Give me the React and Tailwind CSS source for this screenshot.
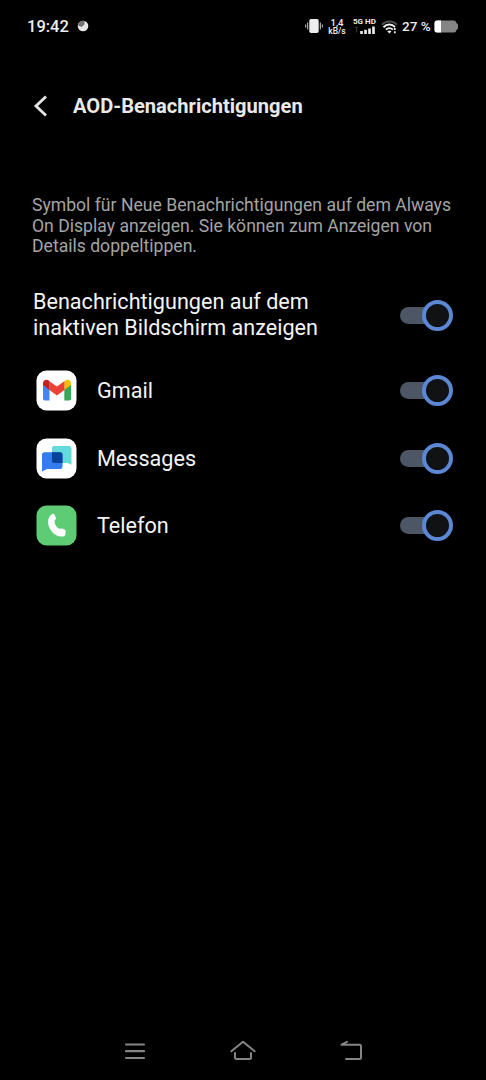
import React from 'react';

function Toggle() {
  return (
    <button role="switch" aria-checked="true" className="flex h-[31px] w-[53px] shrink-0 items-center">
      <span className="h-[17px] w-[31px] shrink-0 rounded-l-full bg-[#4d5664]" />
      <span className="-ml-[9px] h-[31px] w-[31px] shrink-0 rounded-full border-4 border-[#5b87d5] bg-[#111214]" />
    </button>
  );
}

function GmailIcon() {
  return (
    <svg width="41" height="41" viewBox="0 0 41 41">
      <rect x=".5" y=".5" width="40" height="40" rx="10" fill="#fff" />
      <path d="M7 14v14.500q0 2 2 2h4.500V18z" fill="#4285f4" />
      <path d="M28.300 18v12.500h4.700q2 0 2-2V14z" fill="#34a853" />
      <path d="M28.300 11.200v8.800l6.700-5v-1.500c0-3.500-3.300-4.600-5.800-2.900z" fill="#fbbc04" />
      <path d="M13.400 20v-8.800l7.500 5.400 7.500-5.400V20L20.900 25.500z" fill="#ea4335" />
      <path d="M7 13.500V15l6.500 5v-8.800l-.7-.6C10.200 8.900 7 10.300 7 13.500z" fill="#c5221f" />
    </svg>
  );
}

function MessagesIcon() {
  return (
    <svg width="41" height="41" viewBox="0 0 41 41">
      <rect x=".5" y=".5" width="40" height="40" rx="10" fill="#fff" />
      <path d="M18 8h15q2.500 0 2.500 2.500v16.300L31.500 25H16V10q0-2 2-2z" fill="#63dbda" />
      <path d="M8.500 14.300H24q2.500 0 2.500 2.500v11.700q0 2.500-2.500 2.500H11l-5 2.500V16.800q0-2.500 2.500-2.500z" fill="#327ced" />
      <path d="M16 14.300h8q2.500 0 2.500 2.500V25H18q-2 0-2-2z" fill="#07439b" />
    </svg>
  );
}

function PhoneIcon() {
  return (
    <svg width="41" height="41" viewBox="0 0 41 41">
      <rect x=".5" y=".5" width="40" height="40" rx="10" fill="#5dcc75" />
      <path d="M16.500 8.900c.9-.5 1.600-.2 1.900.6l1.500 3.300c.3.700.1 1.300-.4 1.700l-.8.800c-.6 3.300 1.700 7.300 4.900 8.500l1-.3c.6-.2 1.100-.1 1.700.1l2.500 1.200c.8.400 1 .9.900 1.700l-.4 3.100c-.1.900-.5 1.400-1.400 1.600-4.300 1-8.800-.6-12-4.500-3.300-3.800-4.600-8.700-3.500-12.600.7-2.400 2-4.200 4.100-5.200z" fill="#fff" />
    </svg>
  );
}

function StatusBar() {
  return (
    <div className="flex h-[53px] items-center pl-[27px] pr-[27px] text-[#eeeeee]">
      <span className="w-[43px] whitespace-nowrap pt-[1px] text-[16.500px] font-medium">19:42</span>
      <svg className="-mt-[1px] ml-[7px]" width="12" height="12" viewBox="0 0 12 12">
        <circle cx="6" cy="6" r="5.300" fill="#e8e8e8" />
        <path d="M1 5.500A5 5 0 0 1 6 .8l1.500.2v3.500L4.500 7z" fill="#737373" />
      </svg>
      <svg className="-mt-[1px] ml-auto" width="18" height="16" viewBox="0 0 18 16">
        <rect x="4.300" y="1" width="9.400" height="14" rx="1.800" fill="#eee" />
        <path d="M2.700 4.500v7M.7 6.500v3M15.300 4.500v7M17.300 6.500v3" stroke="#ccc" strokeWidth="1" />
      </svg>
      <div className="ml-[5px] w-[20px] whitespace-nowrap text-center font-medium">
        <div className="-ml-[2px] text-[9.500px] leading-[9px]">1,4</div>
        <div className="-ml-[2px] text-[8.500px] leading-[9px]">kB/s</div>
      </div>
      <div className="-mt-[1px] ml-[5px] w-[24px] whitespace-nowrap text-[8px] font-bold leading-[8px]">
        <div>5G HD</div>
        <svg className="ml-[1px]" width="22" height="8" viewBox="0 0 22 8">
          <path d="M1 1.500h3M2.500 1.500v5" stroke="#333" />
          <path d="M7.500 8V5M11.500 8V3.800M15.500 8V2.400M19.500 8V.5" stroke="#eee" strokeWidth="2.600" />
        </svg>
      </div>
      <svg className="ml-[4px]" width="17" height="14" viewBox="0 0 17 14" fill="none">
        <path d="M1 4.700C5 .3 12 .3 16 4.700" stroke="#515151" strokeWidth="1.800" />
        <path d="M2.500 7.200C6 3.700 10.700 3.700 14 7" stroke="#eee" strokeWidth="2" />
        <path d="M4.900 9.700c2-2 5-2 7 0" stroke="#eee" strokeWidth="1.800" />
        <path d="M6.300 11.200q2.200-1.600 4.200 0l-2.100 2.300z" fill="#eee" />
        <path d="M13.800 8v2M13.800 11.200v2" stroke="#eee" strokeWidth="1.700" />
      </svg>
      <span className="ml-[4px] w-[29px] whitespace-nowrap text-[13.500px] font-medium">27 %</span>
      <svg className="ml-[3px]" width="25" height="13" viewBox="0 0 25 13">
        <path d="M3 .5h17q2 0 2.500 2.500l1.500 1.500v4L22.500 10q-.5 2.500-2.500 2.500H3q-2.500 0-2.500-2.500V3Q.5.500 3 .5z" fill="#858585" />
        <path d="M3 .5h4v12H3Q.5 12.500.5 10V3Q.5.500 3 .5z" fill="#fff" />
      </svg>
    </div>
  );
}

function AppRow({ icon, name }) {
  return (
    <div className="flex h-[67.500px] items-center pl-[4px]">
      {icon}
      <span className="ml-[20px] flex-1 pt-[1px] text-[21.600px] leading-[26px] text-[#f4f4f4]">{name}</span>
      <Toggle />
    </div>
  );
}

export default function App() {
  return (
    <div className="flex h-[1080px] w-[486px] flex-col overflow-hidden bg-black font-['Roboto',sans-serif]">
      <StatusBar />
      <header className="mt-[26px] flex h-[53px] items-center pl-[33px]">
        <svg width="16" height="22" viewBox="0 0 16 22" fill="none">
          <path d="M13 1.500 3 11l10 9.500" stroke="#e4e4e4" strokeWidth="2.900" />
        </svg>
        <h1 className="ml-[24px] whitespace-nowrap pt-[2px] text-[20.100px] font-bold text-[#e9e9e9]">AOD-Benachrichtigungen</h1>
      </header>
      <main className="flex-1 pl-[32px] pr-[33px] pt-[63px]">
        <p className="whitespace-nowrap text-[17.600px] leading-[20.700px] text-[#a4a4a4]">
          Symbol für Neue Benachrichtigungen auf dem Always<br />
          On Display anzeigen. Sie können zum Anzeigen von<br />
          Details doppeltippen.
        </p>
        <div className="mt-[32px] flex h-[52px] items-center justify-between">
          <p className="whitespace-nowrap pl-[1px] text-[21.600px] leading-[25.800px] text-[#f4f4f4]">
            Benachrichtigungen auf dem<br />
            inaktiven Bildschirm anzeigen
          </p>
          <Toggle />
        </div>
        <div className="mt-[16px]">
          <AppRow icon={<GmailIcon />} name="Gmail" />
          <AppRow icon={<MessagesIcon />} name="Messages" />
          <AppRow icon={<PhoneIcon />} name="Telefon" />
        </div>
      </main>
      <nav className="flex h-[58px] items-center justify-between pl-[124px] pr-[123px]">
        <svg width="22" height="20" viewBox="0 0 22 20">
          <path d="M2 3.500h18M2 10.200h18M2 17h18" stroke="#858585" strokeWidth="2.200" strokeLinecap="round" />
        </svg>
        <svg width="26" height="22" viewBox="0 0 26 22" fill="none" stroke="#858585" strokeWidth="2" strokeLinecap="round" strokeLinejoin="round">
          <path d="M1.300 11.200 13 1.800l11.700 9.400M5 13v4.500q0 1.500 1.500 1.500h13q1.500 0 1.500-1.500V13" />
        </svg>
        <svg width="24" height="22" viewBox="0 0 24 22" fill="none" stroke="#858585" strokeWidth="2" strokeLinecap="round" strokeLinejoin="round">
          <path d="M8 1.900 2.500 4.700h18q1.500 0 1.500 1.500v11.300q0 1.500-1.500 1.500H7" />
        </svg>
      </nav>
    </div>
  );
}
